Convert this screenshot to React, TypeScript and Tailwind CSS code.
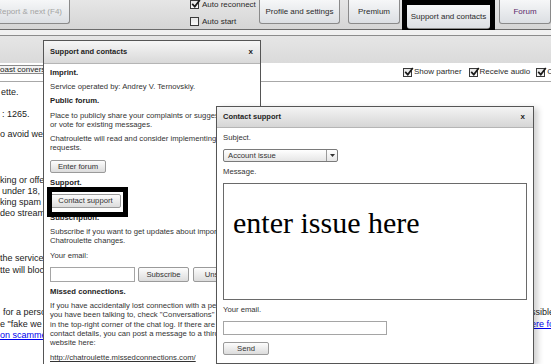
import React from "react";

function Box({ checked }: { checked?: boolean }) {
  return (
    <span className="relative inline-block w-[9px] h-[9px] shrink-0 border border-[#3a3a3a] bg-gradient-to-b from-[#e6e6e6] to-[#fafafa]">
      {checked && (
        <svg className="absolute left-0 top-[-2px]" width="10" height="10" viewBox="0 0 10 10">
          <path d="M1.2 4.8 L3.8 7.6 L8.8 1" stroke="#1a1a1a" strokeWidth="1.7" fill="none" />
        </svg>
      )}
    </span>
  );
}

function TopBtn({ children, className = "" }: { children: React.ReactNode; className?: string }) {
  return (
    <div
      className={
        "h-[24px] shrink-0 border border-t-0 border-[#8a8a8a] rounded-b-[3px] bg-gradient-to-b from-[#f6f7f8] to-[#dcdfe3] text-[8px] text-[#2a2a2a] flex items-center justify-center whitespace-nowrap " +
        className
      }
    >
      {children}
    </div>
  );
}

function Btn({ children, className = "" }: { children: React.ReactNode; className?: string }) {
  return (
    <div
      className={
        "shrink-0 border border-[#9a9a9a] rounded-[2px] bg-gradient-to-b from-[#fdfdfd] to-[#dcdcdc] text-[7.7px] text-[#333] flex items-center justify-center leading-none whitespace-nowrap " +
        className
      }
    >
      {children}
    </div>
  );
}

export default function App() {
  return (
    <div className="relative w-[551px] h-[364px] overflow-hidden bg-white font-['Liberation_Sans',Arial,sans-serif]">
      {/* top bar */}
      <div className="flex items-start h-[30px] border-b border-[#6b6b6b] bg-gradient-to-b from-[#e6e6e6] to-[#d5d5d5]">
        <TopBtn className="w-[70px] border-l-0 rounded-bl-none justify-end pr-[7px] text-[#a3a3a3]">
          Report &amp; next (F4)
        </TopBtn>
        <div className="ml-[120px] w-[74px] flex flex-col gap-[8px] text-[8px] text-[#2a2a2a]">
          <div className="flex items-center gap-[3px] h-[9px] whitespace-nowrap">
            <Box checked />
            <span>Auto reconnect</span>
          </div>
          <div className="flex items-center gap-[3px] h-[9px] whitespace-nowrap">
            <Box />
            <span>Auto start</span>
          </div>
        </div>
        <TopBtn className="w-[81px]">Profile and settings</TopBtn>
        <TopBtn className="ml-[8px] w-[52px]">Premium</TopBtn>
        <div className="ml-[2px] w-[93px] h-[30px] border-[5px] border-black shrink-0">
          <TopBtn className="w-full h-[20px] border-x-0 rounded-none pt-0">Support and contacts</TopBtn>
        </div>
        <TopBtn className="ml-[4px] w-[52px] text-[#5b2868]">Forum</TopBtn>
      </div>
      {/* strip */}
      <div className="h-[6px] bg-[#f1f1f1] border-b border-[#8c8c8c]" />
      {/* gray panel */}
      <div className="h-[27px] bg-gradient-to-b from-[#e6e6e6] to-[#dadada]" />
      {/* toolbar row */}
      <div className="flex items-start h-[19px] border-b border-[#a8a8a8] bg-white overflow-hidden">
        <div className="mt-[2px] h-[9px] w-[80px] shrink-0 border border-l-0 border-[#8a8a8a] bg-[#f4f4f4] text-[8px] leading-[8px] text-[#222] whitespace-nowrap overflow-hidden">
          oast conversation
        </div>
        <div className="ml-[323px] mt-[3px] flex items-center text-[8px] text-[#2a2a2a] whitespace-nowrap">
          <Box checked />
          <span className="ml-[2px]">Show partner</span>
          <span className="ml-[7px]" />
          <Box checked />
          <span className="ml-[2px]">Receive audio</span>
          <span className="ml-[6px]" />
          <Box checked />
          <span className="ml-[2px]">Chat</span>
        </div>
      </div>
      {/* background content */}
      <div className="text-[9px] leading-[11px] text-[#222] whitespace-nowrap">
        <div className="mt-[5px] pl-[1px]">ette.</div>
        <div className="mt-[11px] pl-[2px]">: 1265.</div>
        <div className="mt-[9px]">o avoid we</div>
        <div className="mt-[35px]">
          <div>king or offe</div>
          <div className="pl-[2px]">under 18,</div>
          <div>king spam i</div>
          <div>deo stream</div>
        </div>
        <div className="mt-[33px] leading-[12px]">
          <div>the service</div>
          <div>tte will bloc</div>
        </div>
        <div className="mt-[31px] leading-[11.5px]">
          <div className="flex justify-between">
            <span className="pl-[3px]">for a perso</span>
            <span className="w-[20px]">ssible</span>
          </div>
          <div className="flex justify-between">
            <span>e "fake we</span>
            <span className="w-[20px] text-[#0000ee] underline">ere fo</span>
          </div>
          <div className="text-[#0000ee] underline">on scammers</div>
        </div>
      </div>

      {/* Support and contacts dialog */}
      <div className="absolute left-[43px] top-[40px] w-[218px] h-[340px] border border-[#555] bg-white overflow-hidden">
        <div className="h-[23px] flex items-center justify-between pl-[6px] pr-[7px] border-b border-[#b5b5b5] bg-gradient-to-b from-[#f6f6f6] to-[#d9d9d9] text-[7.5px] font-bold text-[#222]">
          <span>Support and contacts</span>
          <span className="text-[8px]">x</span>
        </div>
        <div className="pl-[6px] pt-[4px] text-[7.7px] leading-[9px] text-[#333] whitespace-nowrap">
          <div className="font-bold text-[#222]">Imprint.</div>
          <div className="mt-[5px]">Service operated by: Andrey V. Ternovskiy.</div>
          <div className="mt-[5px] font-bold text-[#222]">Public forum.</div>
          <div className="mt-[6px]">
            <div>Place to publicly share your complaints or suggestions</div>
            <div>or vote for existing messages.</div>
          </div>
          <div className="mt-[5px]">
            <div>Chatroulette will read and consider implementing popular</div>
            <div>requests.</div>
          </div>
          <Btn className="mt-[8px] w-[56px] h-[13px]">Enter forum</Btn>
          <div className="mt-[5px] font-bold text-[#222]">Support.</div>
          <div className="relative mt-[7px] w-[71px]">
            <Btn className="w-[71px] h-[14px]">Contact support</Btn>
            <div className="absolute left-[-3px] right-[-7px] top-[-7px] bottom-[-9px] border-[5px] border-black" />
          </div>
          <div className="mt-[5px] font-bold text-[#222]">Subscription.</div>
          <div className="mt-[5px]">
            <div>Subscribe if you want to get updates about important</div>
            <div>Chatroulette changes.</div>
          </div>
          <div className="mt-[6px]">Your email:</div>
          <div className="mt-[7px] flex h-[15px]">
            <div className="w-[85px] h-[15px] border border-[#a5a5a5] bg-white" />
            <Btn className="ml-[3px] w-[51px] h-[15px]">Subscribe</Btn>
            <Btn className="ml-[4px] w-[66px] h-[15px]">Unsubscribe</Btn>
          </div>
          <div className="mt-[5px] font-bold text-[#222]">Missed connections.</div>
          <div className="mt-[5px] leading-[9.25px]">
            <div>If you have accidentally lost connection with a person</div>
            <div>you have been talking to, check "Conversations" tab</div>
            <div>in the top-right corner of the chat log. If there are no</div>
            <div>contact details, you can post a message to a third-party</div>
            <div>website here:</div>
          </div>
          <div className="mt-[6px] underline text-[#333]">http://chatroulette.missedconnections.com/</div>
        </div>
      </div>

      {/* Contact support dialog */}
      <div className="absolute left-[216px] top-[106px] w-[318px] h-[258px] border border-[#555] bg-white shadow-[4px_2px_6px_rgba(0,0,0,0.18)]">
        <div className="h-[21px] flex items-center justify-between pl-[6px] pr-[8px] border-b border-[#b5b5b5] bg-gradient-to-b from-[#f4f4f4] to-[#d6d6d6] text-[7.5px] font-bold text-[#222]">
          <span>Contact support</span>
          <span className="text-[8px]">x</span>
        </div>
        <div className="pl-[6px] pt-[5px] text-[7.7px] leading-[9px] text-[#333] whitespace-nowrap">
          <div>Subject.</div>
          <div className="mt-[7px] w-[115px] h-[13px] flex border border-[#7a7a7a] rounded-[2px] bg-gradient-to-b from-[#ffffff] to-[#e6e6e6]">
            <div className="flex-1 pl-[4px] flex items-center leading-none">Account issue</div>
            <div className="w-[11px] border-l border-[#9a9a9a] flex items-center justify-center">
              <svg width="5" height="3" viewBox="0 0 5 3">
                <path d="M0 0 H5 L2.5 3 Z" fill="#333" />
              </svg>
            </div>
          </div>
          <div className="mt-[5px]">Message.</div>
          <div className="mt-[7px] w-[304px] h-[117px] border border-[#6a6a6a] bg-white pl-[9px] pt-[24px] font-['Liberation_Serif','Times_New_Roman',serif] text-[30px] leading-[30px] text-black">
            enter issue here
          </div>
          <div className="mt-[5px]">Your email.</div>
          <div className="mt-[7px] w-[164px] h-[14px] border border-[#a5a5a5] bg-white" />
          <Btn className="mt-[7px] w-[46px] h-[13px]">Send</Btn>
        </div>
      </div>
    </div>
  );
}
